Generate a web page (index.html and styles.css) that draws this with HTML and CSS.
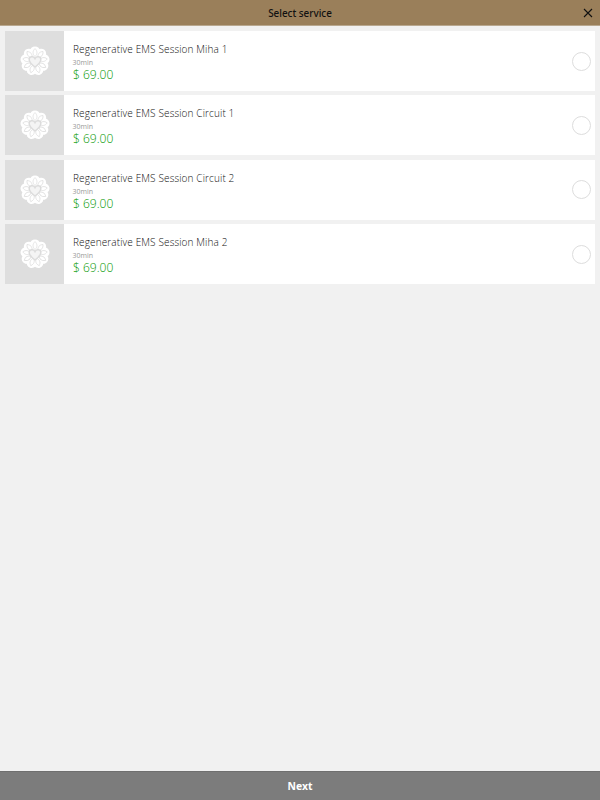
FILE: index.html
```html
<!DOCTYPE html>
<html lang="en">
<head>
<meta charset="utf-8">
<title>Select service</title>
<link rel="stylesheet" href="styles.css">
</head>
<body>
<svg class="defs" width="0" height="0" aria-hidden="true">
  <symbol id="flower" viewBox="0 0 30 30">
    <g fill="#fff" class="lobes">
      <circle cx="15" cy="15" r="11"/>
      <circle cx="15" cy="5.4" r="5"/>
      <circle cx="15" cy="5.4" r="5" transform="rotate(40 15 15)"/>
      <circle cx="15" cy="5.4" r="5" transform="rotate(80 15 15)"/>
      <circle cx="15" cy="5.4" r="5" transform="rotate(120 15 15)"/>
      <circle cx="15" cy="5.4" r="5" transform="rotate(160 15 15)"/>
      <circle cx="15" cy="5.4" r="5" transform="rotate(200 15 15)"/>
      <circle cx="15" cy="5.4" r="5" transform="rotate(240 15 15)"/>
      <circle cx="15" cy="5.4" r="5" transform="rotate(280 15 15)"/>
      <circle cx="15" cy="5.4" r="5" transform="rotate(320 15 15)"/>
    </g>
    <g fill="none" stroke="#e2e2e2" stroke-width="0.9">
      <path d="M15 10.5 C12.4 8 12.4 5.2 15 2.6 C17.6 5.2 17.6 8 15 10.5Z"/>
      <path d="M15 10.5 C12.4 8 12.4 5.2 15 2.6 C17.6 5.2 17.6 8 15 10.5Z" transform="rotate(40 15 15)"/>
      <path d="M15 10.5 C12.4 8 12.4 5.2 15 2.6 C17.6 5.2 17.6 8 15 10.5Z" transform="rotate(80 15 15)"/>
      <path d="M15 10.5 C12.4 8 12.4 5.2 15 2.6 C17.6 5.2 17.6 8 15 10.5Z" transform="rotate(120 15 15)"/>
      <path d="M15 10.5 C12.4 8 12.4 5.2 15 2.6 C17.6 5.2 17.6 8 15 10.5Z" transform="rotate(160 15 15)"/>
      <path d="M15 10.5 C12.4 8 12.4 5.2 15 2.6 C17.6 5.2 17.6 8 15 10.5Z" transform="rotate(200 15 15)"/>
      <path d="M15 10.5 C12.4 8 12.4 5.2 15 2.6 C17.6 5.2 17.6 8 15 10.5Z" transform="rotate(240 15 15)"/>
      <path d="M15 10.5 C12.4 8 12.4 5.2 15 2.6 C17.6 5.2 17.6 8 15 10.5Z" transform="rotate(280 15 15)"/>
      <path d="M15 10.5 C12.4 8 12.4 5.2 15 2.6 C17.6 5.2 17.6 8 15 10.5Z" transform="rotate(320 15 15)"/>
    </g>
    <path fill="#f4f4f4" stroke="#dcdcdc" stroke-width="1.5" d="M15 21 C11 18 9.2 15.6 9.2 13.4 C9.2 10.6 13.4 9.7 15 12.6 C16.6 9.7 20.8 10.6 20.8 13.4 C20.8 15.6 19 18 15 21Z"/>
  </symbol>
</svg>
<div class="page">
  <header class="topbar">
    <span class="topbar-title">Select service</span>
    <svg class="close" viewBox="0 0 10 10" width="10" height="10" aria-label="Close"><path d="M1 1 L9 9 M9 1 L1 9" stroke="#111" stroke-width="1.1" fill="none"/></svg>
  </header>
  <main class="list">
    <article class="row">
      <div class="thumb"><svg class="flower"><use href="#flower"/></svg></div>
      <div class="info"><div class="name">Regenerative EMS Session Miha 1</div><div class="dur">30min</div><div class="price">$ 69.00</div></div>
      <span class="radio"></span>
    </article>
    <article class="row">
      <div class="thumb"><svg class="flower"><use href="#flower"/></svg></div>
      <div class="info"><div class="name">Regenerative EMS Session Circuit 1</div><div class="dur">30min</div><div class="price">$ 69.00</div></div>
      <span class="radio"></span>
    </article>
    <article class="row">
      <div class="thumb"><svg class="flower"><use href="#flower"/></svg></div>
      <div class="info"><div class="name">Regenerative EMS Session Circuit 2</div><div class="dur">30min</div><div class="price">$ 69.00</div></div>
      <span class="radio"></span>
    </article>
    <article class="row">
      <div class="thumb"><svg class="flower"><use href="#flower"/></svg></div>
      <div class="info"><div class="name">Regenerative EMS Session Miha 2</div><div class="dur">30min</div><div class="price">$ 69.00</div></div>
      <span class="radio"></span>
    </article>
  </main>
  <footer class="next">Next</footer>
</div>
</body>
</html>
```
FILE: styles.css
```css
* { box-sizing: border-box; }
html, body { margin: 0; height: 100%; }
body { font-family: "Open Sans", sans-serif; background: #f1f1f1; color: #333; }
.defs { position: absolute; }
.page { height: 800px; display: flex; flex-direction: column; }
.topbar {
  height: 26px; flex: none; background: #9a7f5a; border-bottom: 1px solid #b9a88f;
  display: flex; align-items: center; justify-content: center; position: relative;
}
.topbar-title { font-family: "Noto Sans", sans-serif; font-size: 9.9px; font-weight: 500; color: #111; }
.close { position: absolute; right: 7px; top: 8px; }
.list { flex: 1; padding: 5px 5px 0; display: flex; flex-direction: column; gap: 4.45px; }
.row { height: 60px; background: #fff; display: flex; align-items: center; }
.thumb { width: 59px; height: 60px; background: #dedede; display: flex; align-items: center; justify-content: center; flex: none; }
.flower { width: 30px; height: 30px; }
.info { flex: 1; padding: 2px 0 0 9px; }
.name { font-size: 10px; font-weight: 300; letter-spacing: 0.13px; line-height: 14px; color: #111; }
.dur { font-size: 7px; line-height: 9px; color: #999; margin-top: 2px; margin-left: -0.5px; }
.price { font-size: 12px; font-weight: 300; line-height: 15px; color: #009600; }
.radio { width: 19px; height: 19px; border: 1px solid #ddd; border-radius: 50%; margin-right: 4px; flex: none; }
.next {
  height: 29px; flex: none; background: #7c7c7c; border-top: 1px solid #6f6f6f;
  font-family: "Noto Sans", sans-serif; color: #fff; font-weight: 700; font-size: 10.4px; display: flex; align-items: center; justify-content: center;
}
```
